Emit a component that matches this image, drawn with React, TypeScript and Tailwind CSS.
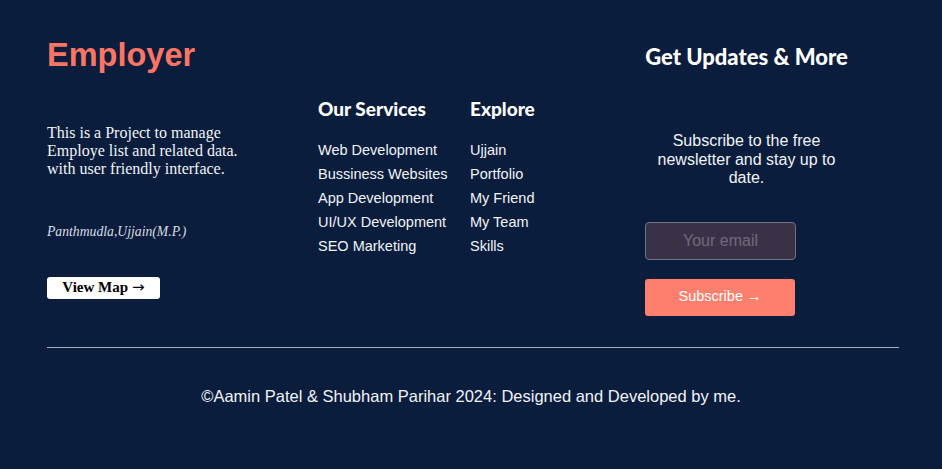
import React from "react";

const services = ["Web Development", "Bussiness Websites", "App Development", "UI/UX Development", "SEO Marketing"];
const explore = ["Ujjain", "Portfolio", "My Friend", "My Team", "Skills"];

const headFont = "font-['Lato',sans-serif] font-black";

export default function App() {
  return (
    <footer className="min-h-[469px] w-full bg-[#0a1d3d] font-['Liberation_Sans',Arial,sans-serif] text-[#f1f3f7]">
      <div className="flex px-[47px] pt-[36px]">
        <div className="w-[271px] shrink-0">
          <h1 className="text-[32.5px] font-bold leading-[38px] text-[#fb7564]">Employer</h1>
          <p className="mt-[50px] w-[210px] font-['Liberation_Serif',serif] text-[16px] leading-[18px]">
            This is a Project to manage Employe list and related data. with user friendly interface.
          </p>
          <p className="mt-[44px] font-['Liberation_Serif',serif] text-[13.7px] italic text-[#d8dce4]">
            Panthmudla,Ujjain(M.P.)
          </p>
          <button className="mt-[34px] flex h-[22px] w-[113px] items-center justify-center gap-[4px] rounded-[3px] bg-white font-['Liberation_Serif',serif] text-[15px] font-bold text-black">
            View Map <span className="font-['DejaVu_Sans',sans-serif] text-[15px] font-normal">→</span>
          </button>
        </div>

        <div className="w-[152px] shrink-0 pt-[61px]">
          <h3 className={`${headFont} text-[19px] leading-[24px] text-white`}>Our Services</h3>
          <ul className="mt-[20px] space-y-[5px]">
            {services.map((s) => (
              <li key={s} className="text-[14.5px] leading-[19px]">{s}</li>
            ))}
          </ul>
        </div>

        <div className="w-[175px] shrink-0 pt-[61px]">
          <h3 className={`${headFont} text-[19px] leading-[24px] text-white`}>Explore</h3>
          <ul className="mt-[20px] space-y-[5px]">
            {explore.map((s) => (
              <li key={s} className="text-[14.5px] leading-[19px]">{s}</li>
            ))}
          </ul>
        </div>

        <div className="w-[203px] shrink-0 pt-[8px]">
          <h3 className={`${headFont} whitespace-nowrap text-center text-[22px] leading-[26px] text-white`}>Get Updates &amp; More</h3>
          <p className="mt-[62px] px-[10px] text-center text-[16px] leading-[18.5px]">
            Subscribe to the free newsletter and stay up to date.
          </p>
          <input
            placeholder="Your email"
            className="mt-[34px] block h-[38px] w-[151px] rounded-[4px] border border-[#6f7283] bg-[#3b3147] text-center text-[16px] text-white placeholder:text-[#6f6a7c] outline-none"
          />
          <button className="mt-[19px] flex h-[37px] w-[150px] items-center justify-center rounded-[3px] bg-[#fe7f6e] text-[14.5px] text-white">
            Subscribe →
          </button>
        </div>
      </div>

      <hr className="ml-[47px] mr-[43px] mt-[31px] border-0 border-t border-[#a7adba]" />
      <p className="mt-[38px] text-center text-[16.5px] leading-[20px]">
        ©Aamin Patel &amp; Shubham Parihar 2024: Designed and Developed by me.
      </p>
    </footer>
  );
}
